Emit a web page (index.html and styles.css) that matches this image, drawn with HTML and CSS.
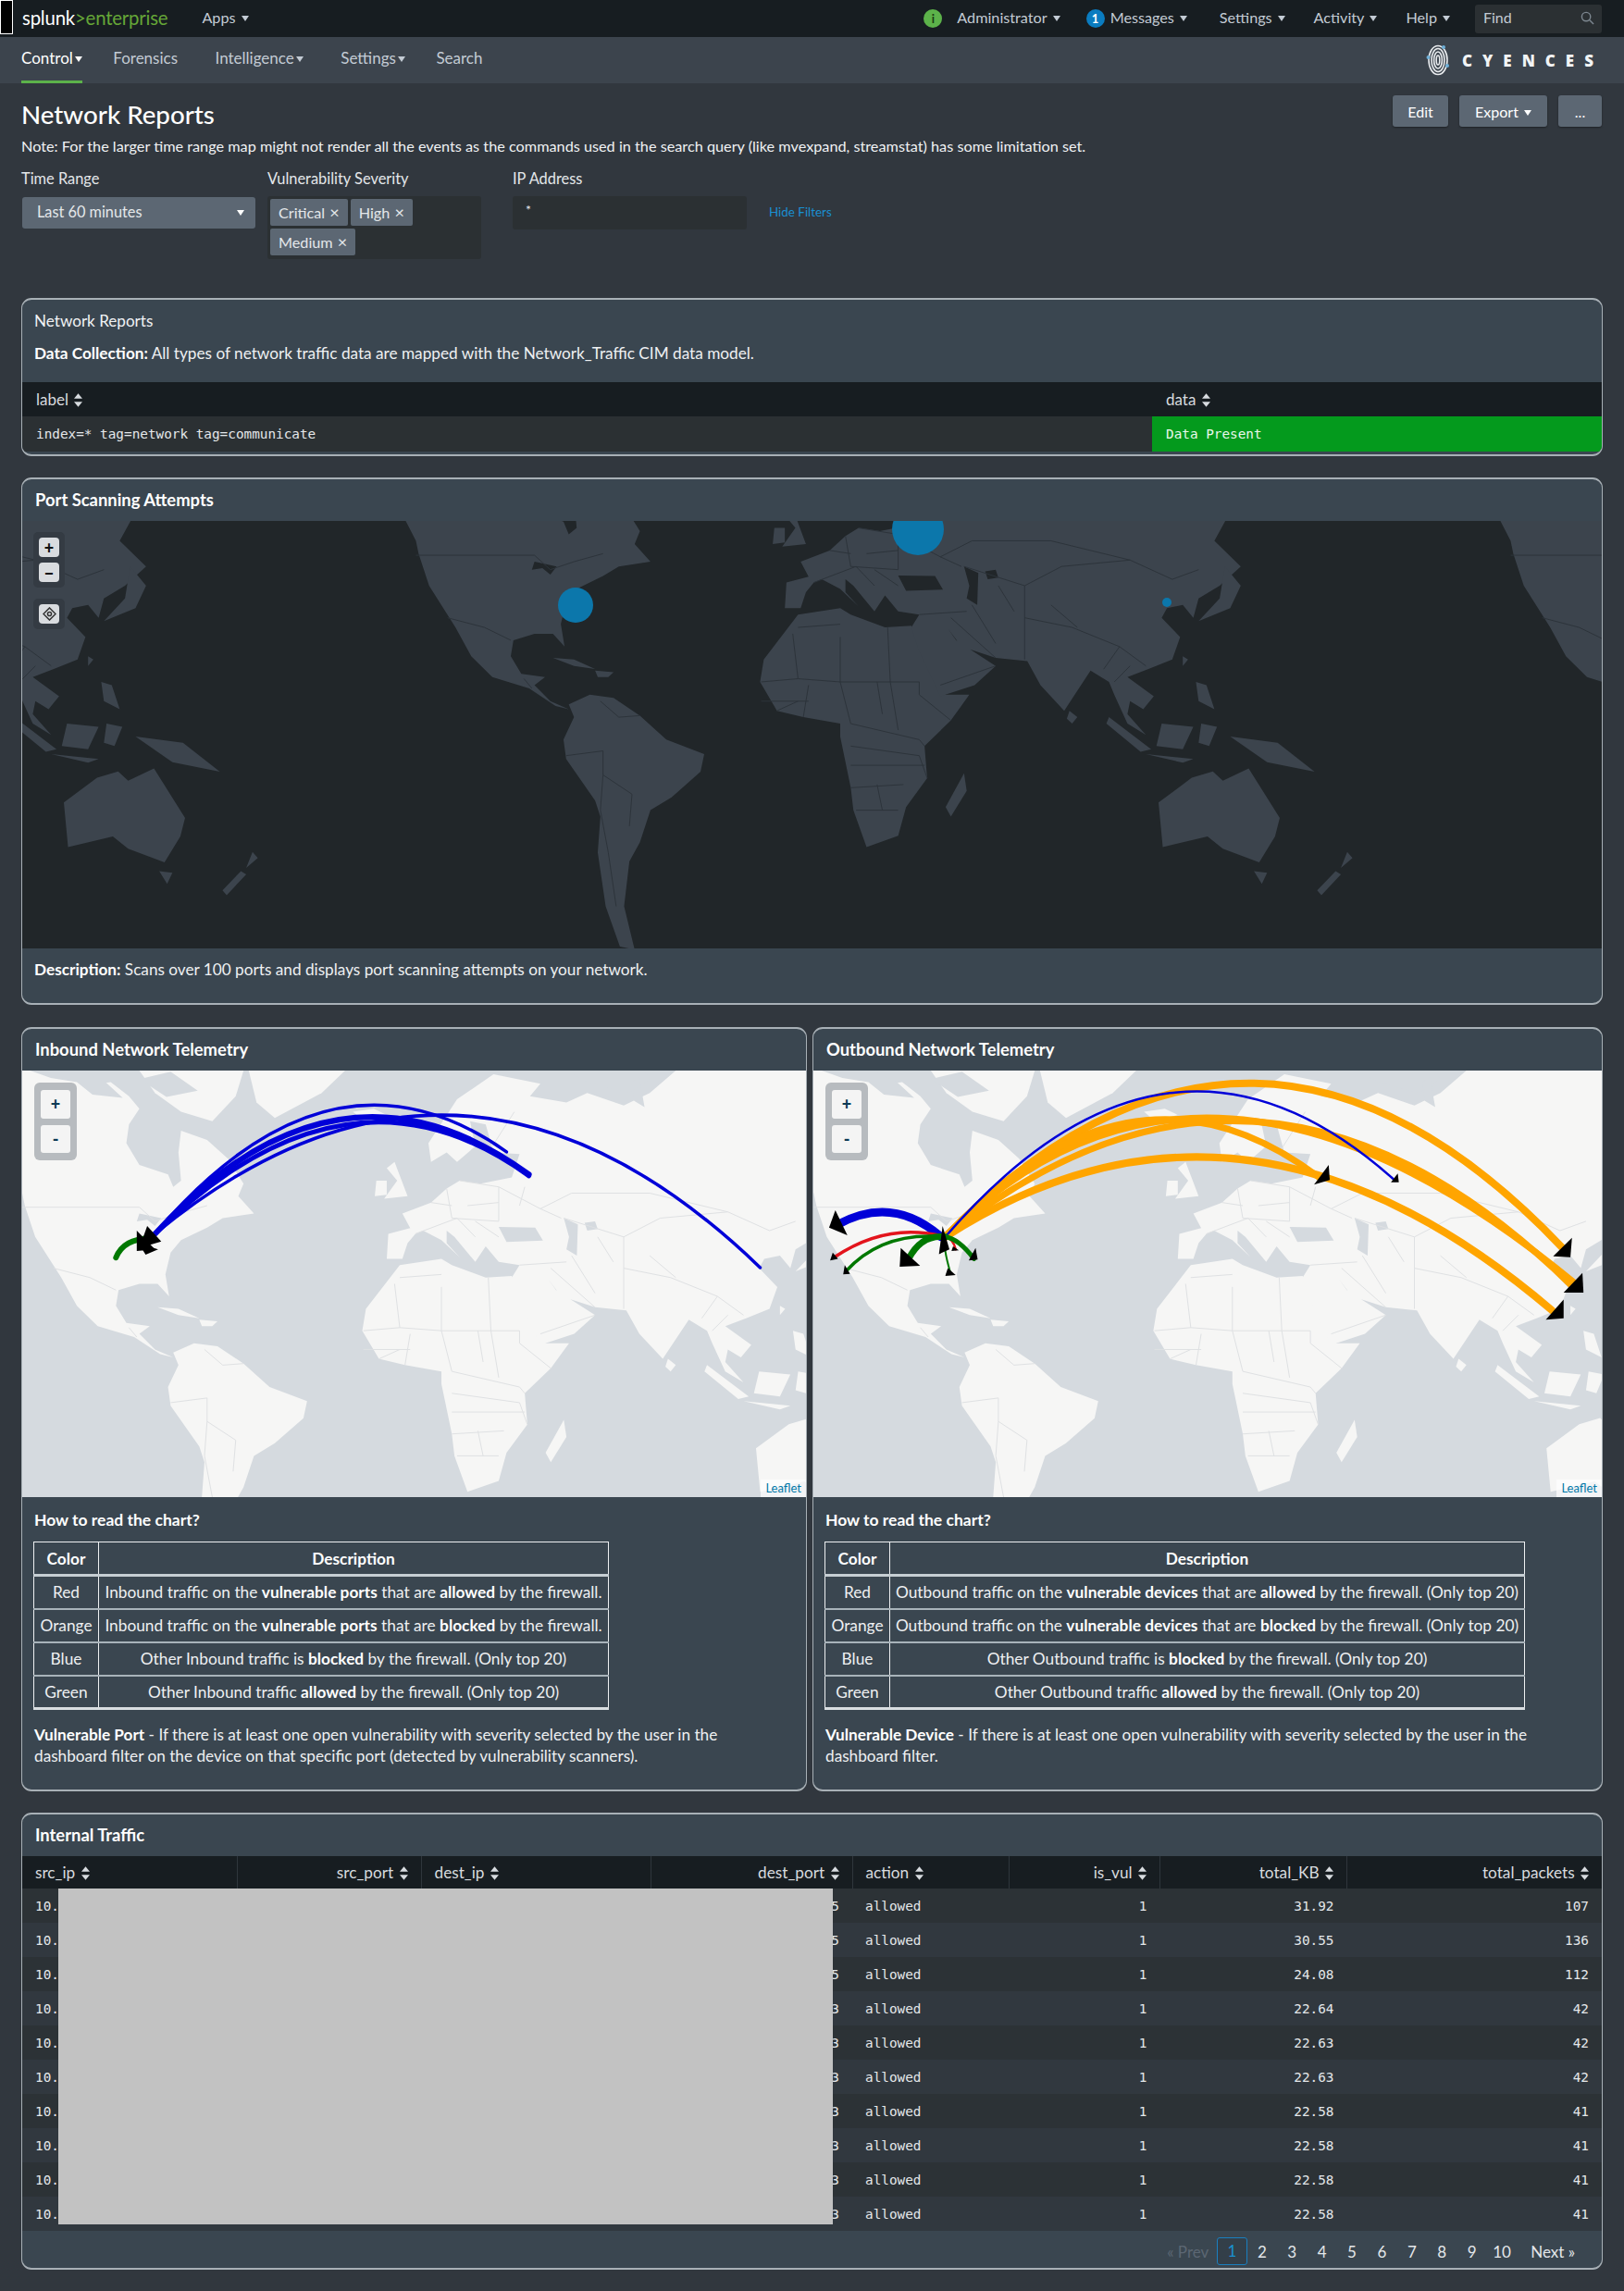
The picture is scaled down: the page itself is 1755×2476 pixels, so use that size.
FILE: index.html
```html
<!DOCTYPE html>
<html lang="en">
<head>
<meta charset="utf-8">
<title>Network Reports</title>
<link rel="stylesheet" href="styles.css">
</head>
<body>
<svg class="defs" width="0" height="0" aria-hidden="true">
  <defs>
    <g id="land">
      <path class="land" d="M-250,168 L120,168 L170,215 L215,205 L250,250 L270,290 L250,340 L245,400 L270,470 L325,500 L335,540 L350,520 L345,430 L350,360 L400,390 L440,450 L470,530 L460,570 L490,625 L430,640 L400,670 L350,710 L330,750 L320,820 L327,890 L305,850 L270,850 L230,870 L225,920 L245,975 L290,985 L270,1010 L300,1060 L335,1085 L310,1075 L260,1020 L190,985 L150,920 L120,830 L70,700 L50,600 L45,560 L20,480 L-40,440 L-120,380 L-260,410 L-190,340 L-270,300 Z"/>
      <path class="land" d="M270,168 L470,168 L455,250 L410,330 L350,300 L300,240 Z"/>
      <path class="land" d="M480,168 L665,168 L620,240 L530,320 L495,270 Z"/>
      <path class="land" d="M680,300 L720,290 L745,310 L700,328 Z"/>
      <path class="land" d="M305,925 L345,930 L385,960 L345,950 Z M385,965 L420,970 L410,985 L390,985 Z"/>
      <path class="land" d="M335,1070 L375,1040 L420,1050 L470,1105 L520,1180 L592,1225 L585,1280 L530,1360 L490,1400 L470,1500 L450,1560 L440,1700 L460,1835 L432,1825 L405,1700 L390,1532 L395,1420 L385,1370 L330,1240 L325,1180 L345,1110 Z"/>
      <path class="land" d="M770,790 L850,770 L870,790 L935,830 L985,825 L1000,880 L1050,1040 L1095,1040 L1060,1120 L1010,1200 L1015,1300 L975,1390 L960,1480 L900,1515 L875,1400 L870,1330 L850,1170 L850,1130 L780,1110 L730,1090 L698,1000 L705,930 Z"/>
      <path class="land" d="M1085,1285 L1090,1340 L1060,1420 L1050,1390 Z"/>
      <path class="land" d="M745,770 L748,690 L790,672 L775,625 L830,590 L860,545 L885,520 L925,530 L985,510 L1000,435 L950,430 L935,340 L905,330 L915,410 L880,460 L860,430 L830,460 L825,400 L880,260 L950,180 L1040,210 L1020,250 L1090,270 L1130,240 L1200,280 L1250,240 L1300,168 L1900,168 L1900,330 L1780,300 L1700,330 L1690,440 L1720,500 L1680,400 L1640,400 L1590,470 L1560,560 L1610,640 L1570,700 L1530,740 L1520,800 L1500,760 L1470,770 L1460,800 L1495,860 L1480,930 L1435,960 L1395,985 L1445,1045 L1425,1085 L1400,1060 L1395,1100 L1430,1165 L1395,1130 L1370,1040 L1360,1000 L1325,965 L1275,1090 L1230,1010 L1205,935 L1145,925 L1080,890 L1055,835 L1070,870 L1145,950 L1105,1010 L1040,1045 L1000,905 L985,830 L1000,790 L960,780 L935,730 L915,780 L875,700 L860,680 L860,720 L885,765 L850,710 L815,680 L800,690 L785,720 L775,770 Z"/>
      <path class="land" d="M760,460 L785,570 L740,578 L765,520 L745,480 Z M725,520 L745,520 L745,565 L722,570 Z"/>
      <path class="land" d="M1285,1090 L1300,1110 L1290,1130 L1280,1115 Z"/>
      <path class="land" d="M1360,1110 L1440,1210 L1420,1218 L1355,1130 Z M1460,1130 L1520,1140 L1500,1210 L1450,1200 Z M1430,1225 L1520,1240 L1500,1252 Z M1535,1130 L1565,1140 L1550,1200 L1530,1190 Z M1525,1000 L1545,1010 L1560,1085 L1530,1060 Z M1500,920 L1510,930 L1500,950 Z"/>
      <path class="land" d="M1580,640 L1610,700 L1590,770 L1530,810 L1570,740 Z"/>
      <path class="land" d="M1590,1170 L1680,1190 L1750,1280 L1660,1250 Z"/>
      <path class="land" d="M1454,1376 L1517,1299 L1557,1279 L1576,1308 L1625,1270 L1684,1424 L1675,1482 L1645,1563 L1576,1520 L1547,1482 L1462,1515 Z"/>
      <path class="land" d="M1635,1590 L1660,1595 L1650,1630 Z M1812,1530 L1822,1549 L1800,1580 Z M1790,1590 L1800,1600 L1763,1665 L1755,1650 Z"/>
      <path class="sea" d="M270,625 L312,640 L300,665 L285,645 L265,650 Z M960,668 L1030,670 L1045,712 L975,716 Z M1085,640 L1112,660 L1110,760 L1090,740 L1095,700 Z M1125,655 L1145,650 L1150,675 L1130,680 Z"/>
      <path class="sea" d="M60,168 L100,192 L150,205 L180,245 L238,255 L205,205 L160,168 Z M270,195 L330,172 L382,232 L322,252 Z M1090,168 L1130,205 L1210,240 L1250,195 L1240,168 Z M1230,190 L1240,285 L1220,265 L1215,205 Z"/>
      <path class="border" d="M45,605 L270,605 L300,650 L345,625 L400,600 M105,800 L175,830 L225,870 M250,990 L265,1020 M395,1060 L430,1110 L470,1105 M330,1230 L400,1215 L400,1290 L455,1350 L450,1450 M400,1290 L395,1400 L410,1532 L425,1700 M770,830 L850,820 M700,1000 L770,990 M760,850 L770,990 L850,1000 L850,860 M850,1000 L870,1130 M940,830 L945,1000 L1000,1000 L1000,1040 M850,1000 L945,1000 M870,1130 L1000,1180 L1010,1200 M870,1200 L1000,1230 L1015,1300 M870,1330 L970,1320 M880,1400 L960,1400 M945,1000 L960,1150 M1000,1040 L1060,1120 M780,1110 L790,1010 M730,1090 L770,1060 M800,690 L880,640 M860,545 L870,640 M885,520 L960,540 L960,650 M960,540 L1040,610 L1080,640 M830,590 L870,600 M940,430 L990,300 M870,640 L960,650 M880,640 L915,700 M1085,640 L1200,700 L1270,640 L1400,620 L1480,680 L1530,650 M1100,760 L1145,880 M1200,700 L1200,930 M1200,800 L1290,830 L1380,890 L1430,950 M1370,1000 L1400,950 M1000,790 L1090,780 M1060,800 L1145,925 M1380,890 L1350,960 M1040,1010 L1145,950 M1040,610 L1100,560 L1250,560 L1400,620 M900,600 L960,590 M915,650 L960,700 M1000,600 L1010,540 M920,1000 L930,1100 M700,1060 L790,1060 M1150,700 L1180,780 M1250,760 L1300,830 M870,1260 L1010,1260 M920,1320 L930,1400"/>
    </g>
    <g id="sort-icon">
      <path class="sort-path" d="M4,0 L8,5 L0,5 Z M4,13 L0,8 L8,8 Z"/>
    </g>
  </defs>
</svg>

<header class="topbar">
  <span class="skip"></span>
  <span class="logo">splunk<span class="logo-green">&gt;enterprise</span></span>
  <span class="top-item apps">Apps<i class="caret"></i></span>
  <div class="top-right">
    <span class="badge badge-green">i</span>
    <span class="top-item">Administrator<i class="caret"></i></span>
    <span class="badge badge-blue">1</span>
    <span class="top-item top-msg">Messages<i class="caret"></i></span>
    <span class="top-item">Settings<i class="caret"></i></span>
    <span class="top-item">Activity<i class="caret"></i></span>
    <span class="top-item">Help<i class="caret"></i></span>
    <div class="find">
      <span>Find</span>
      <svg class="find-icon" viewBox="0 0 16 16"><circle cx="6.5" cy="6.5" r="5"/><path d="M10.5,10.5 L15,15"/></svg>
    </div>
  </div>
</header>

<nav class="appbar">
  <span class="app-item active">Control<i class="caret caret-light"></i></span>
  <span class="app-item">Forensics</span>
  <span class="app-item wide">Intelligence<i class="caret"></i></span>
  <span class="app-item wide">Settings<i class="caret"></i></span>
  <span class="app-item">Search</span>
  <div class="brand">
    <svg class="print" viewBox="0 0 26 34">
      <ellipse class="p-ring" cx="13" cy="17" rx="10" ry="15.5"/>
      <ellipse class="p-ring" cx="13" cy="17" rx="7" ry="12.5"/>
      <ellipse class="p-ring" cx="13" cy="17" rx="4.4" ry="9"/>
      <ellipse class="p-ring" cx="13" cy="17" rx="1.8" ry="5"/>
      <circle class="p-dot" cx="19" cy="3" r="2"/>
      <circle class="p-dot" cx="2.5" cy="14" r="2"/>
      <circle class="p-dot" cx="23" cy="23" r="2"/>
    </svg>
    <span class="brand-text">CYENCES</span>
  </div>
</nav>

<main class="page">
  <div class="title-row">
    <h1 class="title">Network Reports</h1>
    <div class="actions">
      <button class="btn btn-edit">Edit</button>
      <button class="btn btn-export">Export<i class="caret caret-light"></i></button>
      <button class="btn btn-more">...</button>
    </div>
  </div>
  <p class="note">Note: For the larger time range map might not render all the events as the commands used in the search query (like mvexpand, streamstat) has some limitation set.</p>

  <div class="filters">
    <div class="filter f-time">
      <label class="f-label">Time Range</label>
      <div class="select"><span>Last 60 minutes</span><i class="caret caret-light"></i></div>
    </div>
    <div class="filter f-sev">
      <label class="f-label">Vulnerability Severity</label>
      <div class="multi">
        <span class="tag">Critical <b class="x">×</b></span>
        <span class="tag">High <b class="x">×</b></span>
        <span class="tag">Medium <b class="x">×</b></span>
      </div>
    </div>
    <div class="filter f-ip">
      <label class="f-label">IP Address</label>
      <div class="text-input">*</div>
    </div>
    <a class="hide-filters">Hide Filters</a>
  </div>

  <section class="panel p-status">
    <h2 class="panel-plain">Network Reports</h2>
    <p class="panel-text"><strong>Data Collection:</strong> All types of network traffic data are mapped with the Network_Traffic CIM data model.</p>
    <table class="status-table">
      <thead><tr><th class="st-label">label <svg class="sort" viewBox="0 0 8 13"><use href="#sort-icon"/></svg></th><th>data <svg class="sort" viewBox="0 0 8 13"><use href="#sort-icon"/></svg></th></tr></thead>
      <tbody><tr><td>index=* tag=network tag=communicate</td><td class="ok">Data Present</td></tr></tbody>
    </table>
  </section>

  <section class="panel p-port">
    <h2 class="panel-title">Port Scanning Attempts</h2>
    <div class="map map-dark">
      <svg class="map-svg" viewBox="-702 498 2997 1333" preserveAspectRatio="none">
        <use href="#land" x="-2077"/>
        <use href="#land"/>
        <use href="#land" x="2077"/>
      </svg>
      <span class="pin pin-ru"></span>
      <span class="pin pin-us"></span>
      <span class="pin pin-cn"></span>
      <div class="geo-ctrl geo-zoom">
        <span class="geo-btn"><span>+</span></span>
        <span class="geo-btn"><span>−</span></span>
      </div>
      <div class="geo-ctrl geo-target">
        <span class="geo-btn">
          <svg class="target" viewBox="0 0 16 16"><path d="M8,1 L15,8 L8,15 L1,8 Z"/><circle cx="8" cy="8" r="2.2"/></svg>
        </span>
      </div>
    </div>
    <p class="panel-text desc"><strong>Description:</strong> Scans over 100 ports and displays port scanning attempts on your network.</p>
  </section>

  <div class="two-up">
    <section class="panel p-tele p-in">
      <h2 class="panel-title">Inbound Network Telemetry</h2>
      <div class="map map-light">
        <svg class="map-svg" viewBox="45 168 1505 1364" preserveAspectRatio="none">
          <use href="#land"/>
          <path class="arc c-blue w5" d="M300,690 Q670,85 1018,505"/>
          <path class="arc c-blue w4" d="M300,690 Q637,30 975,428"/>
          <path class="arc c-blue w6" d="M300,690 Q650,55 1018,500"/>
          <path class="arc c-blue w4" d="M300,690 Q891,-120 1462,798"/>
          <path class="arc c-green w6" d="M225,766 Q240,705 290,705"/>
          <polygon class="head" points="285,665 270,735 312,715"/>
          <polygon class="head" points="265,680 265,745 300,740"/>
          <polygon class="head" points="282,757 268,720 306,740"/>
        </svg>
        <div class="lf-ctrl"><span class="lf-btn">+</span><span class="lf-btn">-</span></div>
        <span class="lf-attr">Leaflet</span>
      </div>
      <h3 class="how">How to read the chart?</h3>
      <table class="legend l-in">
        <thead><tr><th class="lc">Color</th><th>Description</th></tr></thead>
        <tbody>
          <tr><td class="lc">Red</td><td>Inbound traffic on the <strong>vulnerable ports</strong> that are <strong>allowed</strong> by the firewall.</td></tr>
          <tr><td class="lc">Orange</td><td>Inbound traffic on the <strong>vulnerable ports</strong> that are <strong>blocked</strong> by the firewall.</td></tr>
          <tr><td class="lc">Blue</td><td>Other Inbound traffic is <strong>blocked</strong> by the firewall. (Only top 20)</td></tr>
          <tr><td class="lc">Green</td><td>Other Inbound traffic <strong>allowed</strong> by the firewall. (Only top 20)</td></tr>
        </tbody>
      </table>
      <p class="panel-text vuln"><strong>Vulnerable Port</strong> - If there is at least one open vulnerability with severity selected by the user in the<br>dashboard filter on the device on that specific port (detected by vulnerability scanners).</p>
    </section>

    <section class="panel p-tele p-out">
      <h2 class="panel-title">Outbound Network Telemetry</h2>
      <div class="map map-light">
        <svg class="map-svg" viewBox="18 168 1507 1364" preserveAspectRatio="none">
          <use href="#land" transform="translate(-26 0) scale(.994 1)"/>
          <path class="arc c-orange w8" d="M270,700 Q862,-300 1450,735"/>
          <path class="arc c-orange w7" d="M270,700 Q767,-130 1475,850"/>
          <path class="arc c-orange w7" d="M270,700 Q876,-115 1470,860"/>
          <path class="arc c-orange w8" d="M270,700 Q838,90 1430,935"/>
          <path class="arc c-orange w7" d="M270,700 Q629,60 985,510"/>
          <path class="arc c-blue w3" d="M270,700 Q698,-130 1130,520"/>
          <path class="arc c-blue w9" d="M262,700 Q170,565 65,660"/>
          <path class="arc c-red w4" d="M270,700 Q160,650 58,765"/>
          <path class="arc c-red w3" d="M270,700 Q285,705 290,740"/>
          <path class="arc c-green w4" d="M270,700 Q150,680 80,810"/>
          <path class="arc c-green w7" d="M270,700 Q225,690 200,770"/>
          <path class="arc c-green w5" d="M270,700 Q295,705 325,770"/>
          <path class="arc c-green w2" d="M270,700 Q265,730 280,815"/>
          <polygon class="head" points="1468,703 1432,762 1465,765"/>
          <polygon class="head" points="1488,815 1452,878 1490,878"/>
          <polygon class="head" points="1452,900 1418,965 1452,960"/>
          <polygon class="head" points="1003,470 975,533 1005,518"/>
          <polygon class="head" points="1135,497 1122,525 1137,525"/>
          <polygon class="head" points="60,615 48,670 83,695"/>
          <polygon class="head" points="55,750 50,775 65,770"/>
          <polygon class="head" points="78,790 75,820 88,818"/>
          <polygon class="head" points="185,735 183,795 222,792"/>
          <polygon class="head" points="265,665 258,755 278,740"/>
          <polygon class="head" points="328,735 315,775 332,772"/>
          <polygon class="head" points="275,800 270,825 290,822"/>
          <polygon class="head" points="285,730 282,745 296,743"/>
        </svg>
        <div class="lf-ctrl"><span class="lf-btn">+</span><span class="lf-btn">-</span></div>
        <span class="lf-attr">Leaflet</span>
      </div>
      <h3 class="how">How to read the chart?</h3>
      <table class="legend l-out">
        <thead><tr><th class="lc">Color</th><th>Description</th></tr></thead>
        <tbody>
          <tr><td class="lc">Red</td><td>Outbound traffic on the <strong>vulnerable devices</strong> that are <strong>allowed</strong> by the firewall. (Only top 20)</td></tr>
          <tr><td class="lc">Orange</td><td>Outbound traffic on the <strong>vulnerable devices</strong> that are <strong>blocked</strong> by the firewall. (Only top 20)</td></tr>
          <tr><td class="lc">Blue</td><td>Other Outbound traffic is <strong>blocked</strong> by the firewall. (Only top 20)</td></tr>
          <tr><td class="lc">Green</td><td>Other Outbound traffic <strong>allowed</strong> by the firewall. (Only top 20)</td></tr>
        </tbody>
      </table>
      <p class="panel-text vuln"><strong>Vulnerable Device</strong> - If there is at least one open vulnerability with severity selected by the user in the<br>dashboard filter.</p>
    </section>
  </div>

  <section class="panel p-traffic">
    <h2 class="panel-title">Internal Traffic</h2>
    <div class="traffic-wrap">
      <table class="traffic">
        <colgroup>
          <col class="c1"><col class="c2"><col class="c3"><col class="c4"><col class="c5"><col class="c6"><col class="c7"><col class="c8">
        </colgroup>
        <thead>
          <tr>
            <th>src_ip <svg class="sort" viewBox="0 0 8 13"><use href="#sort-icon"/></svg></th>
            <th class="r">src_port <svg class="sort" viewBox="0 0 8 13"><use href="#sort-icon"/></svg></th>
            <th>dest_ip <svg class="sort" viewBox="0 0 8 13"><use href="#sort-icon"/></svg></th>
            <th class="r">dest_port <svg class="sort" viewBox="0 0 8 13"><use href="#sort-icon"/></svg></th>
            <th>action <svg class="sort" viewBox="0 0 8 13"><use href="#sort-icon"/></svg></th>
            <th class="r">is_vul <svg class="sort" viewBox="0 0 8 13"><use href="#sort-icon"/></svg></th>
            <th class="r">total_KB <svg class="sort" viewBox="0 0 8 13"><use href="#sort-icon"/></svg></th>
            <th class="r">total_packets <svg class="sort" viewBox="0 0 8 13"><use href="#sort-icon"/></svg></th>
          </tr>
        </thead>
        <tbody>
          <tr><td>10.</td><td></td><td></td><td class="r">5</td><td>allowed</td><td class="r">1</td><td class="r">31.92</td><td class="r">107</td></tr>
          <tr><td>10.</td><td></td><td></td><td class="r">5</td><td>allowed</td><td class="r">1</td><td class="r">30.55</td><td class="r">136</td></tr>
          <tr><td>10.</td><td></td><td></td><td class="r">5</td><td>allowed</td><td class="r">1</td><td class="r">24.08</td><td class="r">112</td></tr>
          <tr><td>10.</td><td></td><td></td><td class="r">3</td><td>allowed</td><td class="r">1</td><td class="r">22.64</td><td class="r">42</td></tr>
          <tr><td>10.</td><td></td><td></td><td class="r">3</td><td>allowed</td><td class="r">1</td><td class="r">22.63</td><td class="r">42</td></tr>
          <tr><td>10.</td><td></td><td></td><td class="r">3</td><td>allowed</td><td class="r">1</td><td class="r">22.63</td><td class="r">42</td></tr>
          <tr><td>10.</td><td></td><td></td><td class="r">3</td><td>allowed</td><td class="r">1</td><td class="r">22.58</td><td class="r">41</td></tr>
          <tr><td>10.</td><td></td><td></td><td class="r">3</td><td>allowed</td><td class="r">1</td><td class="r">22.58</td><td class="r">41</td></tr>
          <tr><td>10.</td><td></td><td></td><td class="r">3</td><td>allowed</td><td class="r">1</td><td class="r">22.58</td><td class="r">41</td></tr>
          <tr><td>10.</td><td></td><td></td><td class="r">3</td><td>allowed</td><td class="r">1</td><td class="r">22.58</td><td class="r">41</td></tr>
        </tbody>
      </table>
      <div class="redact"></div>
    </div>
    <div class="pager">
      <span class="pg prev">« Prev</span>
      <span class="pg current">1</span>
      <span class="pg">2</span>
      <span class="pg">3</span>
      <span class="pg">4</span>
      <span class="pg">5</span>
      <span class="pg">6</span>
      <span class="pg">7</span>
      <span class="pg">8</span>
      <span class="pg">9</span>
      <span class="pg">10</span>
      <span class="pg next">Next »</span>
    </div>
  </section>
</main>
</body>
</html>
```

FILE: styles.css
```css
* { box-sizing: border-box; }
html, body { margin: 0; padding: 0; }
body {
  background: #31373e;
  color: #e4e7ea;
  font-family: "Lato", "Open Sans", sans-serif;
  font-size: 16px;
  width: 1755px;
  height: 2476px;
  overflow: hidden;
}
.defs { position: absolute; }

.caret {
  display: inline-block;
  width: 0; height: 0;
  margin-left: 6px;
  border-left: 4.5px solid transparent;
  border-right: 4.5px solid transparent;
  border-top: 6px solid #c3cbd4;
  vertical-align: 2px;
}
.caret-light { border-top-color: #fff; }

/* top bar */
.topbar {
  height: 40px;
  background: #171d21;
  display: flex;
  align-items: center;
  color: #c3cbd4;
}
.skip { width: 14px; height: 37px; align-self: flex-start; background: #000; border: 1px solid #fff; }
.logo { margin-left: 10px; font-size: 20.4px; color: #fff; letter-spacing: -0.2px; padding-bottom: 3px; }
.logo-green { color: #65a637; }
.top-item { font-size: 16.2px; white-space: nowrap; padding-bottom: 3px; }
.apps { margin-left: 37px; }
.top-right { margin-left: auto; display: flex; align-items: center; gap: 31px; padding-right: 24px; }
.badge {
  width: 20px; height: 20px; border-radius: 50%;
  display: flex; align-items: center; justify-content: center;
  font-size: 13px; font-weight: 700; color: #fff; margin-bottom: 1px;
}
.badge-green { background: #5cb24a; color: #1b3a14; margin-right: -15px; }
.badge-blue { background: #0a7cc0; margin-left: -3px; margin-right: -25px; }
.top-msg { margin-right: 4px; }
.find {
  width: 137px; height: 31px; background: #2b3033; border-radius: 3px;
  display: flex; align-items: center; justify-content: space-between;
  padding: 0 8px 3px 9px; font-size: 16px; margin-left: -4px;
}
.find-icon { width: 15px; height: 15px; fill: none; stroke: #7d8790; stroke-width: 1.5; margin-top: 2px; }

/* app bar */
.appbar {
  height: 50px;
  background: #3c444d;
  display: flex;
  align-items: center;
  padding-left: 23px;
  gap: 33.5px;
  color: #c3cbd4;
  font-size: 17px;
}
.app-item { height: 50px; line-height: 46px; white-space: nowrap; }
.app-item .caret { margin-left: 2px; }
.app-item.wide { margin-left: 7px; }
.app-item.active { color: #fff; border-bottom: 3px solid #5cb24a; }
.brand { margin-left: auto; display: flex; align-items: center; gap: 13px; padding-right: 22px; }
.print { width: 26px; height: 34px; }
.p-ring { fill: none; stroke: #e8ebee; stroke-width: 1.6; }
.p-dot { fill: #6fb0d8; }
.brand-text { color: #f2f4f5; font-weight: 800; font-size: 17px; letter-spacing: 11px; font-family: "Open Sans", sans-serif; }

/* page */
.page { padding: 13px 23px 0; }
.title-row { display: flex; justify-content: space-between; align-items: flex-start; height: 44px; }
.title { margin: 8px 0 0; font-size: 27.7px; font-weight: 500; color: #fff; line-height: 26px; }
.actions { display: flex; gap: 12px; padding-right: 1px; }
.btn {
  height: 34px; background: #5c6773; color: #fff; border: 0; border-radius: 3px;
  font-family: inherit; font-size: 16px; box-shadow: 0 1px 2px rgba(0,0,0,.4);
}
.btn-edit { width: 60px; }
.btn-export { width: 95px; }
.btn-more { width: 47px; }
.note { margin: 0; font-size: 16.25px; line-height: 22px; color: #f0f2f4; white-space: nowrap; }

.filters { display: flex; margin-top: 14px; height: 139px; align-items: flex-start; }
.filter { display: flex; flex-direction: column; }
.f-label { font-size: 16.4px; line-height: 20px; margin-bottom: 10px; }
.f-time { width: 266px; }
.f-sev { width: 265px; }
.f-ip { width: 277px; }
.select {
  width: 252px; height: 34px; margin-left: 1px; background: #5c6773; border-radius: 3px;
  display: flex; justify-content: space-between; align-items: center;
  padding: 0 12px 3px 16px; font-size: 16.3px;
}
.select .caret { margin: 3px 0 0; }
.multi {
  width: 231px; height: 68px; background: #2b3033; border-radius: 3px;
  padding: 3px; display: flex; flex-wrap: wrap; gap: 3px; align-content: flex-start;
  margin-top: -1px;
}
.tag {
  height: 29px; background: #5c6773; border-radius: 2px; padding: 0 9px;
  line-height: 28px; font-size: 16.2px; white-space: nowrap;
}
.x { font-weight: 400; font-size: 18px; margin-left: 1px; }
.text-input {
  width: 253px; height: 36px; margin-top: -1px; background: #2b3033; border-radius: 3px;
  padding: 6px 14px; font-size: 14px;
}
.hide-filters { color: #1a8fd1; font-size: 13.4px; margin-top: 38px; }

/* panels */
.panel {
  background: #3a4650;
  border: 1px solid #a8b0b6;
  border-top-width: 2px;
  border-bottom-width: 2px;
  border-radius: 11px;
  overflow: hidden;
  margin-bottom: 23px;
}
.panel-plain { margin: 0; padding: 13px 13px 0; font-size: 17.1px; font-weight: 400; line-height: 20px; color: #f0f2f4; }
.panel-title { margin: 0; height: 45px; padding: 12px 14px 0; font-size: 18.4px; line-height: 20px; font-weight: 700; color: #fff; }
.panel-text { margin: 0; font-size: 17.2px; line-height: 23px; color: #eef0f2; }
.panel-text strong { color: #fff; }
.p-status { height: 171px; }
.p-status .panel-text { padding: 13px 13px 0; }
.status-table { width: 100%; margin-top: 20px; border-collapse: collapse; table-layout: fixed; }
.status-table th {
  height: 37px; background: #171d21; text-align: left; padding: 0 14px 0 15px;
  font-size: 17px; font-weight: 400; color: #d7dbdf;
}
.st-label { width: 1221px; }
.status-table td {
  height: 38px; background: #2b3033; padding: 0 14px 0 15px;
  font-family: "DejaVu Sans Mono", monospace; font-size: 14.35px; color: #e4e7ea;
}
.status-table .ok { background: #049a1d; color: #e9f7eb; }
.sort { width: 9px; height: 15px; vertical-align: -2px; margin-left: 2px; }
.sort-path { fill: #d7dbdf; }

/* maps */
.p-port { height: 570px; margin-bottom: 24px; }
.map { position: relative; height: 462px; overflow: hidden; }
.map-svg { display: block; width: 100%; height: 100%; }
.map-dark { --land: #3c444d; --water: #212629; --border: #2d343b; background: #212629; }
.map-light { --land: #f6f6f5; --water: #d5dadf; --border: #dfe1e3; background: #d5dadf; height: 461px; }
.land { fill: var(--land); }
.sea { fill: var(--water); }
.border { fill: none; stroke: var(--border); stroke-width: 1; vector-effect: non-scaling-stroke; }
.arc { fill: none; vector-effect: non-scaling-stroke; stroke-linecap: round; }
.c-blue { stroke: #0000d8; }
.c-orange { stroke: #ffa500; }
.c-green { stroke: #007800; }
.c-red { stroke: #e3141c; }
.w2 { stroke-width: 2px; }
.w3 { stroke-width: 2.5px; }
.w4 { stroke-width: 3.5px; }
.w5 { stroke-width: 5px; }
.w6 { stroke-width: 6px; }
.w7 { stroke-width: 7px; }
.w8 { stroke-width: 8px; }
.w9 { stroke-width: 9px; }
.head { fill: #000; }

.pin { position: absolute; border-radius: 50%; background: #0c77ab; }
.pin-ru { left: 940px; top: -19px; width: 56px; height: 56px; }
.pin-us { left: 579px; top: 72px; width: 38px; height: 38px; }
.pin-cn { left: 1232px; top: 83px; width: 10px; height: 10px; }
.geo-ctrl {
  position: absolute; left: 12px; background: #343b43; border-radius: 5px;
  padding: 6px; display: flex; flex-direction: column; gap: 6px;
}
.geo-zoom { top: 12px; }
.geo-target { top: 84px; }
.geo-btn {
  width: 22px; height: 21px; background: #d9dcdf; border-radius: 4px;
  display: flex; align-items: center; justify-content: center;
  color: #111; font-weight: 900; font-size: 18px; line-height: 1;
}
.target { width: 15px; height: 15px; fill: none; stroke: #333; stroke-width: 1.6; }
.lf-ctrl {
  position: absolute; left: 13px; top: 13px; width: 46px; height: 84px;
  background: #b7bbbf; border-radius: 6px; padding: 8px 7px;
  display: flex; flex-direction: column; gap: 7px;
}
.lf-btn {
  height: 31px; background: #f4f4f4; border-radius: 3px;
  display: flex; align-items: center; justify-content: center;
  font-weight: 900; font-size: 18px; line-height: 1; color: #0d3a55;
}
.lf-attr {
  position: absolute; right: 0; bottom: 0; padding: 1px 5px;
  background: rgba(255,255,255,.7); color: #0078a8; font-size: 13px; line-height: 17px;
}
.desc { padding: 11px 13px 0; height: 59px; }

.two-up { display: grid; grid-template-columns: 849px 854px; gap: 6px; }
.p-tele { height: 826px; }
.how { margin: 15px 0 0; padding-left: 13px; font-size: 17.5px; line-height: 20px; font-weight: 700; color: #fff; }
.legend {
  margin: 13px 0 0 12px; border-collapse: collapse; table-layout: fixed;
  font-size: 17.3px; text-align: center; color: #eef0f2;
  border: 1px solid #eef0f2;
}
.l-in { width: 622px; }
.l-out { width: 757px; }
.legend th, .legend td { height: 36px; padding: 0; border-bottom: 2px solid #a8b3ba; white-space: nowrap; }
.legend th { color: #fff; font-weight: 700; border-bottom-width: 3px; border-bottom-color: #c6ced3; }
.legend tbody tr:last-child td { border-bottom-color: #d8dde0; border-bottom-width: 3px; }
.legend .lc { width: 70px; border-right: 1px solid #eef0f2; }
.legend strong { color: #fff; }
.vuln { margin-top: 15px; padding: 0 13px; }

/* traffic */
.p-traffic { height: 494px; margin-bottom: 0; }
.traffic-wrap { position: relative; }
.traffic { width: 100%; border-collapse: collapse; table-layout: fixed; }
.c1 { width: 232px; } .c2 { width: 199px; } .c3 { width: 248px; } .c4 { width: 218px; }
.c5 { width: 169px; } .c6 { width: 163.5px; } .c7 { width: 202px; } .c8 { width: auto; }
.traffic th {
  height: 35px; background: #171d21; padding: 0 14px; text-align: left;
  font-size: 17.2px; font-weight: 400; color: #d7dbdf; border-left: 1px solid #2f363c;
  white-space: nowrap;
}
.traffic th:first-child { border-left: 0; }
.traffic td {
  height: 37px; padding: 0 14px; white-space: nowrap;
  font-family: "DejaVu Sans Mono", monospace; font-size: 14.35px; color: #e4e7ea;
}
.traffic .r { text-align: right; }
.traffic tbody tr:nth-child(odd) td { background: #2c3236; }
.traffic tbody tr:nth-child(even) td { background: #31383f; }
.redact { position: absolute; left: 39px; top: 35px; width: 837px; height: 363px; background: #c2c2c2; }
.pager {
  display: flex; justify-content: flex-end; align-items: center; height: 41px;
  font-size: 17px; color: #e4e7ea; padding-right: 29px; padding-top: 3px;
}
.pg { min-width: 32.4px; text-align: center; }
.prev { color: #5c6773; margin-right: 9px; }
.current {
  width: 32px; height: 30px; line-height: 28px;
  border: 1px solid #1a7fbf; border-radius: 3px; color: #1a8fd1; background: #333f49;
}
.next { margin-left: 15px; }
```
